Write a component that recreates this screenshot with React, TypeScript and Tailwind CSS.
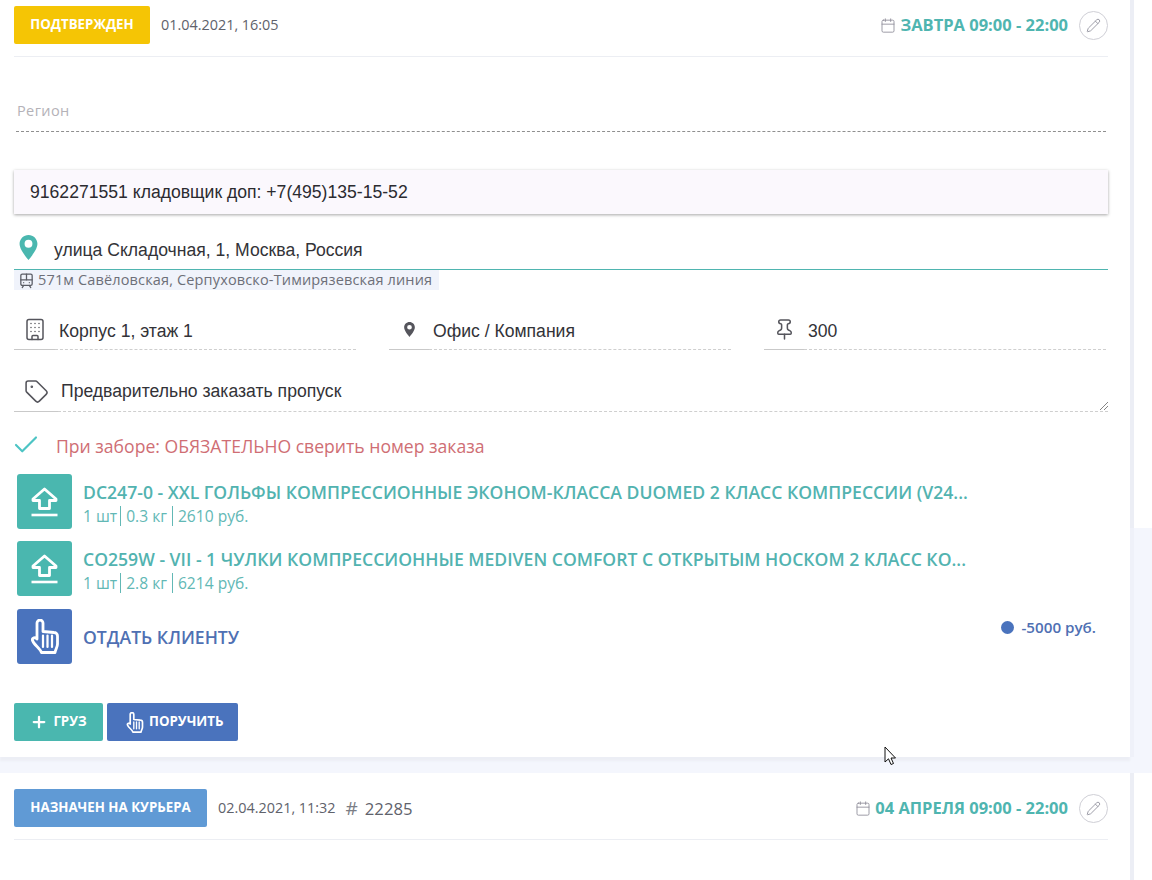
import React from "react";
import { Calendar, Pencil, Building, Tag, Check, Pin, TramFront, Plus } from "lucide-react";

const open = "font-['Open_Sans',sans-serif]";
const arial = "font-['Liberation_Sans',Arial,sans-serif]";

function MapPin({ className, fill }: { className: string; fill: string }) {
  return (
    <svg viewBox="0 0 20 28" className={className}>
      <path fillRule="evenodd" fill={fill} d="M10 0C4.500 0 0 4.400 0 9.900 0 16.500 8 25.500 10 28c2-2.500 10-11.500 10-18.100C20 4.400 15.500 0 10 0Zm0 14.200a4.400 4.400 0 1 1 0-8.800 4.400 4.400 0 0 1 0 8.800Z" />
    </svg>
  );
}

function UploadIcon() {
  return (
    <svg viewBox="0 0 27 30" className="w-[27px] h-[30px] mt-[1px]" fill="none" stroke="#fff">
      <path d="M13.500 2 L25 12 V13.500 H18.500 V21.500 H8.500 V13.500 H2 V12 Z" strokeWidth="2.800" strokeLinejoin="round" />
      <path d="M0.500 28 H26.500" strokeWidth="2.600" />
    </svg>
  );
}

function Hand({ className, sw }: { className: string; sw: number }) {
  return (
    <svg viewBox="0 0 28 35" className={className} fill="none" stroke="#fff" strokeWidth={sw} strokeLinejoin="round" strokeLinecap="round">
      <path d="M6 20 V4 a3 3 0 0 1 6 0 V12.500 L23 13.500 a3.500 3.500 0 0 1 3.500 3.500 V25 c0 3.500 -2 5 -2.500 8.500 H10.500 C9 29 3 26 1.500 21.500 c-0.800 -2.500 3 -3.800 4.500 -1.500 Z" />
      <path d="M12 16.500 V28 M16.500 16.500 V28 M21 16.500 V28" strokeWidth={sw * 0.8} />
    </svg>
  );
}

function Header({ badge, badgeCls, date, extra, when }: { badge: string; badgeCls: string; date: string; extra?: string; when: string }) {
  return (
    <div className="flex items-center h-[51px] border-b border-[#eceef3] pb-[12px]">
      <div className={`h-[38px] flex items-center justify-center rounded-[2px] text-white text-[13.300px] font-bold ${badgeCls} ${open}`}>{badge}</div>
      <span className={`ml-[11px] text-[14.400px] text-[#60626b] ${open}`}>{date}</span>
      {extra && (
        <span className={`ml-[10px] text-[16.700px] text-[#60626b] ${open}`}>
          <span className="text-[19px] text-[#7b7d85] mr-[7px]">#</span>
          {extra}
        </span>
      )}
      <Calendar className="ml-auto w-[16px] h-[17px] text-[#8f8d99]" strokeWidth={1.300} />
      <span className={`ml-[4px] mt-[1px] text-[16.500px] font-bold text-[#4fb5b0] ${open}`}>{when}</span>
      <div className="ml-[11px] w-[29px] h-[29px] rounded-full border border-[#cfcfd6] flex items-center justify-center">
        <Pencil className="w-[15px] h-[15px] text-[#9d9da8]" strokeWidth={1.600} />
      </div>
    </div>
  );
}

function Field({ icon, iconW, text, width }: { icon: React.ReactNode; iconW: string; text: string; width: string }) {
  return (
    <div className={`flex h-[38px] ${width}`}>
      <div className={`${iconW} shrink-0 flex items-center justify-center border-b border-[#c9c9c9] pb-[3px]`}>{icon}</div>
      <div className={`flex-1 pl-[4px] pt-[2px] flex items-center border-b border-dashed border-[#cfcfcf] text-[17.600px] text-[#333338] ${arial}`}>{text}</div>
    </div>
  );
}

function Item({ title, weight, sum }: { title: string; weight: string; sum: string }) {
  return (
    <div className="flex items-center h-[55px] ml-[3px]">
      <div className="w-[55px] h-[55px] rounded-[3px] bg-[#4ab7af] flex items-center justify-center shrink-0">
        <UploadIcon />
      </div>
      <div className={`ml-[11px] ${open}`}>
        <div className="text-[17.600px] leading-[22px] mt-[3px] font-semibold text-[#52b3b0] whitespace-nowrap">{title}</div>
        <div className="text-[15.600px] leading-[20px] text-[#62b8b5] mt-[3px] flex items-center">
          <span className="pr-[3px] border-r border-[#62b8b5]">1 шт</span>
          <span className="px-[5px] border-r border-[#62b8b5]">{weight}</span>
          <span className="pl-[5px]">{sum}</span>
        </div>
      </div>
    </div>
  );
}

export default function App() {
  return (
    <div className="relative w-[1152px] h-[880px] overflow-hidden bg-[#f4f6fd] flex flex-col">
      <div className="flex h-[757px]">
        <div className="w-[1130px] shrink-0 bg-white pt-[6px] pl-[14px] pr-[22px] shadow-[0_4px_2px_#eceef5]">
          <Header badge="ПОДТВЕРЖДЕН" badgeCls="w-[136px] bg-[#f5c505]" date="01.04.2021, 16:05" when="ЗАВТРА 09:00 - 22:00" />

          <div className={`mt-[42px] h-[33px] pt-[1px] ml-[2px] mr-[2px] pl-[1px] border-b border-dashed border-[#8f8f8f] text-[14.500px] text-[#b4b2b8] tracking-[0.4px] ${open}`}>Регион</div>

          <div className={`mt-[38px] h-[44px] bg-[#fbf8fd] shadow-[0_1px_3px_rgba(0,0,0,0.35)] flex items-center pl-[16px] text-[17.600px] text-[#2b2b30] ${arial}`}>
            9162271551 кладовщик доп: +7(495)135-15-52
          </div>

          <div className={`mt-[15px] h-[40px] pt-[2px] flex items-center text-[17.600px] text-[#333338] ${arial}`}>
            <MapPin className="ml-[5px] w-[19px] h-[25px] mb-[5px]" fill="#4ab7af" />
            <span className="ml-[16px]">улица Складочная, 1, Москва, Россия</span>
          </div>
          <div className="h-[1px] bg-[#4fb5b0]" />

          <div className={`w-[425px] h-[20px] bg-[#f0f3fb] flex items-center pl-[4px] text-[14.500px] text-[#6d6f78] tracking-[0.15px] ${open}`}>
            <TramFront className="w-[17px] h-[17px] text-[#5b5d66] mr-[3px]" strokeWidth={1.800} />
            571м Савёловская, Серпуховско-Тимирязевская линия
          </div>

          <div className="mt-[22px] flex gap-[33px]">
            <Field width="w-[342px]" iconW="w-[41px]" text="Корпус 1, этаж 1" icon={<Building className="w-[24px] h-[25px] text-[#55555c]" strokeWidth={1.500} />} />
            <Field width="w-[342px]" iconW="w-[40px]" text="Офис / Компания" icon={<MapPin className="w-[11px] h-[15px]" fill="#55555c" />} />
            <Field width="w-[342px]" iconW="w-[40px]" text="300" icon={<Pin className="w-[23px] h-[23px] text-[#55555c]" strokeWidth={1.600} />} />
          </div>

          <div className={`relative mt-[24px] flex h-[38px] text-[17.600px] text-[#333338] ${arial}`}>
            <div className="w-[44px] shrink-0 border-b border-[#c9c9c9] flex items-center justify-center pb-[3px]">
              <Tag className="w-[25px] h-[25px] text-[#55555c]" strokeWidth={1.500} />
            </div>
            <div className="flex-1 border-b border-dashed border-[#cfcfcf] pl-[3px] pb-[2px] flex items-center">Предварительно заказать пропуск</div>
            <svg viewBox="0 0 9 9" className="absolute right-0 bottom-[2px] w-[9px] h-[9px]" stroke="#666" strokeWidth="0.800">
              <path d="M1 9 L9 1 M5 9 L9 5" />
            </svg>
          </div>

          <div className="mt-[21px] h-[28px] flex items-center">
            <Check className="w-[30px] h-[30px] -ml-[3px] mb-[4px] text-[#4dc4c4]" strokeWidth={1.700} />
            <span className={`ml-[15px] mb-[2px] text-[17.600px] text-[#cf6e74] ${open}`}>При заборе: ОБЯЗАТЕЛЬНО сверить номер заказа</span>
          </div>

          <div className="mt-[13px] flex flex-col gap-[12px]">
            <Item title="DC247-0 - XXL ГОЛЬФЫ КОМПРЕССИОННЫЕ ЭКОНОМ-КЛАССА DUOMED 2 КЛАСС КОМПРЕССИИ (V24..." weight="0.3 кг" sum="2610 руб." />
            <Item title="CO259W - VII - 1 ЧУЛКИ КОМПРЕССИОННЫЕ MEDIVEN COMFORT С ОТКРЫТЫМ НОСКОМ 2 КЛАСС КО..." weight="2.8 кг" sum="6214 руб." />
          </div>

          <div className={`mt-[13px] ml-[3px] flex h-[55px] ${open}`}>
            <div className="w-[55px] h-[55px] rounded-[3px] bg-[#4a73bd] flex items-center justify-center">
              <Hand className="w-[28px] h-[35px]" sw={2.800} />
            </div>
            <span className="ml-[11px] self-center mt-[2px] text-[17.600px] font-semibold text-[#4f70b3]">ОТДАТЬ КЛИЕНТУ</span>
            <div className="ml-auto mr-[12px] h-[36px] flex items-center text-[15.200px] font-semibold text-[#4f70b3]">
              <span className="w-[13px] h-[13px] rounded-full bg-[#4a73bd] mr-[7px]" />
              -5000 руб.
            </div>
          </div>

          <div className={`mt-[39px] flex gap-[4px] text-[13.300px] font-bold text-white ${open}`}>
            <div className="w-[89px] h-[38px] rounded-[2px] bg-[#4ab7af] flex items-center justify-center gap-[5px]">
              <Plus className="w-[18px] h-[18px]" strokeWidth={3} />
              ГРУЗ
            </div>
            <div className="w-[131px] h-[38px] rounded-[2px] bg-[#4a73bd] flex items-center pl-[19px] gap-[5px]">
              <Hand className="w-[18px] h-[21px]" sw={2.800} />
              ПОРУЧИТЬ
            </div>
          </div>
        </div>
        <div className="flex-1 flex flex-col">
          <div className="h-[528px] bg-white border-l-[4px] border-[#eceef5]" />
          <div className="flex-1 border-l-[4px] border-[#eff1f9]" />
        </div>
      </div>

      <div className="mt-[16px] flex flex-1">
        <div className="w-[1130px] shrink-0 bg-white pt-[16px] pl-[14px] pr-[22px]">
          <Header badge="НАЗНАЧЕН НА КУРЬЕРА" badgeCls="w-[193px] bg-[#609ad5]" date="02.04.2021, 11:32" extra="22285" when="04 АПРЕЛЯ 09:00 - 22:00" />
        </div>
        <div className="flex-1 bg-white border-l-[4px] border-[#eceef5]" />
      </div>

      <svg viewBox="0 0 13 20" className="absolute left-[884px] top-[746px] w-[13px] h-[20px]" fill="#fff" stroke="#111" strokeWidth="1">
        <path d="M1 1 V16 L4.500 12.800 L7 18.500 L9.500 17.500 L7 12 H11.500 Z" />
      </svg>
    </div>
  );
}
